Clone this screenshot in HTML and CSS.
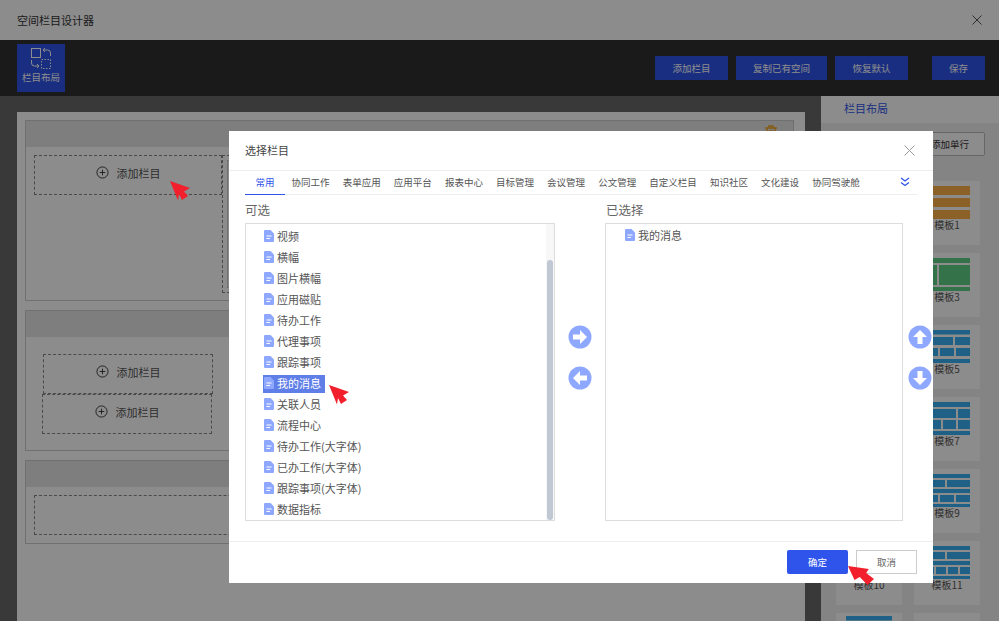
FILE: index.html
```html
<!DOCTYPE html>
<html lang="zh-CN">
<head>
  <meta charset="UTF-8">
  <title>空间栏目设计器</title>
  <link rel="stylesheet" href="styles.css">
</head>
<body>
  <svg class="defs" width="0" height="0">
    <symbol id="doc" viewBox="0 0 10 12">
      <path d="M1 0h5.500L10 3.500V11a1 1 0 0 1-1 1H1a1 1 0 0 1-1-1V1a1 1 0 0 1 1-1z" fill="#8fa8ff"/>
      <path d="M2.500 6h5M2.500 8.500h3.500" stroke="#fff" stroke-width="1"/>
    </symbol>
    <symbol id="tpl-orange" viewBox="0 0 46 33">
      <path d="M0 0h46v9H0zM0 12h46v9H0zM0 24h46v9H0z" fill="#ffb148"/>
    </symbol>
    <symbol id="tpl-green" viewBox="0 0 46 33">
      <path d="M0 0h46v5H0zM0 7h13v20H0zM15 7h31v20H15zM0 29h46v4H0z" fill="#60d188"/>
    </symbol>
    <symbol id="tpl-5" viewBox="0 0 46 33">
      <path d="M0 0h46v4.500H0zM0 7h29v8H0zM31 7h15v8H31zM0 18h14v8H0zM16 18h14v8H16zM32 18h14v8H32zM0 29h46v4H0z" fill="#3ab0f5"/>
    </symbol>
    <symbol id="tpl-7" viewBox="0 0 46 33">
      <path d="M0 0h46v5H0zM0 7h32v9H0zM34 7h12v9H34zM0 18h17v9H0zM19 18h13v9H19zM34 18h12v9H34zM0 29h46v4H0z" fill="#3ab0f5"/>
    </symbol>
    <symbol id="tpl-9" viewBox="0 0 46 33">
      <path d="M0 0h46v4H0zM0 6h21v7H0zM23 6h23v7H23zM0 15h46v4H0zM0 21h14v7H0zM16 21h14v7H16zM32 21h14v7H32zM0 30h46v3H0z" fill="#3ab0f5"/>
    </symbol>
    <symbol id="tpl-11" viewBox="0 0 46 33">
      <path d="M0 0h46v4H0zM0 6h21v7H0zM23 6h23v7H23zM0 15h46v4H0zM0 21h10v7H0zM12 21h10v7H12zM24 21h10v7H24zM36 21h10v7H36zM0 30h46v3H0z" fill="#3ab0f5"/>
    </symbol>
    <symbol id="plus" viewBox="0 0 14 14">
      <circle cx="7" cy="7" r="6" fill="none" stroke="#333" stroke-width="1"/>
      <path d="M4 7h6M7 4v6" stroke="#333" stroke-width="1"/>
    </symbol>
  </svg>

  <div class="app">
    <header class="topbar">
      <span class="topbar-title">空间栏目设计器</span>
      <svg class="close-icon" width="10" height="10" viewBox="0 0 10 10"><path d="M.5.500l9 9M9.500.500l-9 9" stroke="#555" stroke-width="1"/></svg>
    </header>

    <div class="toolbar">
      <div class="layout-btn">
        <svg width="24" height="24" viewBox="0 0 24 24" fill="none" stroke="#fff" stroke-width="1">
          <rect x="2.500" y="2.500" width="9" height="9"/>
          <rect x="12.500" y="13.500" width="9" height="9" stroke-dasharray="1.500 1.500"/>
          <path d="M14 4h4.500a3 3 0 0 1 3 3v3M16 2l-2 2 2 2"/>
          <path d="M2.500 14v3a3 3 0 0 0 3 3H10M8 18l2 2-2 2"/>
        </svg>
        <span>栏目布局</span>
      </div>
      <div class="toolbar-actions">
        <button class="tool-btn w73">添加栏目</button>
        <button class="tool-btn w91">复制已有空间</button>
        <button class="tool-btn w73">恢复默认</button>
        <button class="tool-btn w53 save">保存</button>
      </div>
    </div>

    <div class="workspace">
      <main class="canvas">
        <section class="row">
          <div class="row-head">
            <svg class="trash" width="12" height="13" viewBox="0 0 12 13" fill="none" stroke="#f5a623" stroke-width="1.500"><path d="M0 3h12M4 3V1h4v2M2 3v9h8V3M5 5v5M7 5v5"/></svg>
          </div>
          <div class="row-body first">
            <div class="cell"><svg width="13" height="13"><use href="#plus"/></svg>添加栏目</div>
            <div class="cell tall"><div class="cell-inner"></div></div>
          </div>
        </section>
        <section class="row">
          <div class="row-head"></div>
          <div class="row-body stacked">
            <div class="cell"><svg width="13" height="13"><use href="#plus"/></svg>添加栏目</div>
            <div class="cell shift"><svg width="13" height="13"><use href="#plus"/></svg>添加栏目</div>
          </div>
        </section>
        <section class="row">
          <div class="row-head"></div>
          <div class="row-body last">
            <div class="cell wide"></div>
          </div>
        </section>
      </main>

      <aside class="sidebar">
        <div class="side-title">栏目布局</div>
        <div class="side-tools"><button class="add-row">添加单行</button></div>
        <div class="tpl-grid">
          <div class="tpl"><svg><use href="#tpl-orange"/></svg><span>模板0</span></div>
          <div class="tpl"><svg><use href="#tpl-orange"/></svg><span>模板1</span></div>
          <div class="tpl"><svg><use href="#tpl-green"/></svg><span>模板2</span></div>
          <div class="tpl"><svg><use href="#tpl-green"/></svg><span>模板3</span></div>
          <div class="tpl"><svg><use href="#tpl-5"/></svg><span>模板4</span></div>
          <div class="tpl"><svg><use href="#tpl-5"/></svg><span>模板5</span></div>
          <div class="tpl"><svg><use href="#tpl-7"/></svg><span>模板6</span></div>
          <div class="tpl"><svg><use href="#tpl-7"/></svg><span>模板7</span></div>
          <div class="tpl"><svg><use href="#tpl-9"/></svg><span>模板8</span></div>
          <div class="tpl"><svg><use href="#tpl-9"/></svg><span>模板9</span></div>
          <div class="tpl"><svg><use href="#tpl-11"/></svg><span>模板10</span></div>
          <div class="tpl"><svg><use href="#tpl-11"/></svg><span>模板11</span></div>
          <div class="tpl tpl-cut"><svg><use href="#tpl-5"/></svg></div>
          <div class="tpl"></div>
        </div>
      </aside>
    </div>
  </div>

  <div class="mask"></div>

  <div class="modal">
    <div class="modal-head">
      <span>选择栏目</span>
      <svg width="11" height="11" viewBox="0 0 11 11"><path d="M.5.500l10 10M10.500.500l-10 10" stroke="#999" stroke-width="1"/></svg>
    </div>
    <div class="tabs">
      <span class="tab active">常用</span>
      <span class="tab">协同工作</span>
      <span class="tab">表单应用</span>
      <span class="tab">应用平台</span>
      <span class="tab">报表中心</span>
      <span class="tab">目标管理</span>
      <span class="tab">会议管理</span>
      <span class="tab">公文管理</span>
      <span class="tab">自定义栏目</span>
      <span class="tab">知识社区</span>
      <span class="tab">文化建设</span>
      <span class="tab">协同驾驶舱</span>
      <svg class="tabs-more" width="10" height="10" viewBox="0 0 10 10" fill="none" stroke="#2f54eb" stroke-width="1.300"><path d="M1 1l4 3 4-3M1 5.500l4 3 4-3"/></svg>
    </div>

    <div class="picker">
      <div class="pick-col left">
        <div class="pick-label">可选</div>
        <div class="pick-box">
          <ul class="pick-list">
            <li><span><svg width="10" height="12"><use href="#doc"/></svg>视频</span></li>
            <li><span><svg width="10" height="12"><use href="#doc"/></svg>横幅</span></li>
            <li><span><svg width="10" height="12"><use href="#doc"/></svg>图片横幅</span></li>
            <li><span><svg width="10" height="12"><use href="#doc"/></svg>应用磁贴</span></li>
            <li><span><svg width="10" height="12"><use href="#doc"/></svg>待办工作</span></li>
            <li><span><svg width="10" height="12"><use href="#doc"/></svg>代理事项</span></li>
            <li><span><svg width="10" height="12"><use href="#doc"/></svg>跟踪事项</span></li>
            <li class="selected"><span><svg width="10" height="12"><use href="#doc"/></svg>我的消息</span></li>
            <li><span><svg width="10" height="12"><use href="#doc"/></svg>关联人员</span></li>
            <li><span><svg width="10" height="12"><use href="#doc"/></svg>流程中心</span></li>
            <li><span><svg width="10" height="12"><use href="#doc"/></svg>待办工作(大字体)</span></li>
            <li><span><svg width="10" height="12"><use href="#doc"/></svg>已办工作(大字体)</span></li>
            <li><span><svg width="10" height="12"><use href="#doc"/></svg>跟踪事项(大字体)</span></li>
            <li><span><svg width="10" height="12"><use href="#doc"/></svg>数据指标</span></li>
          </ul>
          <div class="scrollbar"><div class="thumb"></div></div>
        </div>
      </div>

      <div class="arrows mid">
        <svg width="24" height="24" viewBox="0 0 24 24"><circle cx="12" cy="12" r="11.500" fill="#8fa8ff"/><path d="M5 9.500h7V5l7 7-7 7v-4.500H5z" fill="#fff"/></svg>
        <svg width="24" height="24" viewBox="0 0 24 24"><circle cx="12" cy="12" r="11.500" fill="#8fa8ff"/><path d="M19 9.500h-7V5l-7 7 7 7v-4.500h7z" fill="#fff"/></svg>
      </div>

      <div class="pick-col right">
        <div class="pick-label">已选择</div>
        <div class="pick-box">
          <ul class="pick-list">
            <li><span><svg width="10" height="12"><use href="#doc"/></svg>我的消息</span></li>
          </ul>
        </div>
      </div>

      <div class="arrows side">
        <svg width="24" height="24" viewBox="0 0 24 24"><circle cx="12" cy="12" r="11.500" fill="#8fa8ff"/><path d="M9.500 19v-7H5l7-7 7 7h-4.500v7z" fill="#fff"/></svg>
        <svg width="24" height="24" viewBox="0 0 24 24"><circle cx="12" cy="12" r="11.500" fill="#8fa8ff"/><path d="M9.500 5v7H5l7 7 7-7h-4.500V5z" fill="#fff"/></svg>
      </div>
    </div>

    <div class="modal-foot">
      <button class="foot-btn ok">确定</button>
      <button class="foot-btn">取消</button>
    </div>
  </div>

  <svg class="pointer p1" viewBox="0 0 20 20" preserveAspectRatio="none"><path d="M0 0L20 7L14 10.500L18 15L12 19L9 13L8 19.500z"/></svg>
  <svg class="pointer p2" viewBox="0 0 20 20" preserveAspectRatio="none"><path d="M0 0L20 7L14 10.500L18 15L12 19L9 13L8 19.500z"/></svg>
  <svg class="pointer p3" viewBox="0 0 20 20" preserveAspectRatio="none"><path d="M0 0L16 3L14 7L20 13L15 19L9 11L5 14z"/></svg>
</body>
</html>
```

FILE: styles.css
```css
* {
  box-sizing: border-box;
}
html, body {
  margin: 0;
  height: 100%;
}
body {
  position: relative;
  width: 999px;
  height: 621px;
  overflow: hidden;
  font-family: "Noto Sans CJK SC", "Noto Sans", sans-serif;
  color: #333;
  background: #fff;
}
button {
  font-family: inherit;
  cursor: pointer;
}
.defs {
  position: absolute;
}
.app {
  display: flex;
  flex-direction: column;
  height: 621px;
}

/* page under the mask */
.topbar {
  flex: 0 0 40px;
  display: flex;
  align-items: center;
  justify-content: space-between;
  padding: 0 17px 0 17px;
  background: #fff;
  font-size: 11px;
}
.toolbar {
  flex: 0 0 56px;
  display: flex;
  align-items: center;
  padding: 0 14px 0 17px;
  background: #303030;
}
.layout-btn {
  width: 48px;
  height: 48px;
  display: flex;
  flex-direction: column;
  align-items: center;
  padding-top: 2px;
  background: #2f54eb;
  color: #fff;
  font-size: 9.500px;
  line-height: 14px;
}
.toolbar-actions {
  margin-left: auto;
  display: flex;
  gap: 8px;
}
.tool-btn {
  height: 24px;
  padding: 0;
  border: none;
  background: #2f54eb;
  color: #fff;
  font-size: 9.500px;
}
.w73 { width: 73px; }
.w91 { width: 91px; }
.w53 { width: 53px; }
.save { margin-left: 16px; }

.workspace {
  flex: 1;
  display: flex;
  min-height: 0;
  padding-left: 17px;
  background: #696969;
}
.canvas {
  width: 788px;
  margin: 16px 16px 0 0;
  padding: 8px;
  background: #fff;
  display: flex;
  flex-direction: column;
  gap: 9px;
}
.row {
  width: 769px;
  border: 1px solid #ccc;
}
.row-head {
  height: 26px;
  background: #e6e6e6;
  display: flex;
  justify-content: flex-end;
  padding: 4px 16px 0 0;
}
.row-body {
  display: flex;
}
.row-body.first {
  padding: 8px 0 7px 8px;
}
.row-body.stacked {
  flex-direction: column;
  padding: 17px 0 16px 17px;
}
.row-body.last {
  padding: 8px;
}
.cell {
  width: 188px;
  height: 40px;
  display: flex;
  align-items: center;
  justify-content: center;
  gap: 8px;
  padding-bottom: 5px;
  border: 1px dashed #888;
  font-size: 11px;
  color: #555;
}
.stacked .cell {
  width: 170px;
}
.cell.shift {
  margin-left: -1px;
}
.cell.tall {
  flex: 1;
  width: auto;
  height: 138px;
  align-items: stretch;
  justify-content: stretch;
  padding: 4px;
}
.cell-inner {
  flex: 1;
  border: 1px solid #ccc;
}
.cell.wide {
  width: 100%;
}

.sidebar {
  flex: 1;
  background: #f0f0f0;
  overflow: hidden;
}
.side-title {
  height: 27px;
  padding-left: 23px;
  background: #fff;
  color: #2f54eb;
  font-size: 11px;
  line-height: 25px;
}
.side-tools {
  display: flex;
  justify-content: flex-end;
  padding: 9px 14px 0 0;
}
.add-row {
  width: 70px;
  height: 24px;
  padding: 0;
  border: 1px solid #bbb;
  border-radius: 2px;
  background: #fff;
  color: #333;
  font-size: 9.500px;
}
.tpl-grid {
  display: grid;
  grid-template-columns: 66px 66px;
  gap: 8px 12px;
  padding: 25px 0 0 15px;
}
.tpl {
  height: 64px;
  padding-top: 5px;
  background: #fff;
  display: flex;
  flex-direction: column;
  align-items: center;
  font-size: 10px;
  line-height: 14px;
  color: #555;
}
.tpl svg {
  width: 46px;
  height: 33px;
  margin-bottom: -1px;
  flex: none;
}
.tpl-cut {
  padding-top: 3px;
}

.mask {
  position: absolute;
  inset: 0;
  background: rgba(0, 0, 0, 0.45);
}

/* dialog */
.modal {
  position: absolute;
  left: 229px;
  top: 131px;
  width: 704px;
  height: 452px;
  background: #fff;
  display: flex;
  flex-direction: column;
}
.modal-head {
  flex: 0 0 40px;
  display: flex;
  align-items: center;
  justify-content: space-between;
  padding: 0 18px 1px 16px;
  border-bottom: 1px solid #eee;
  font-size: 11px;
  color: #444;
}
.tabs {
  width: 672px;
  height: 24px;
  margin-left: 16px;
  display: flex;
  align-items: center;
  border-bottom: 1px solid #eee;
}
.tab {
  height: 24px;
  padding: 0 6.550px;
  font-size: 9.500px;
  line-height: 23px;
  color: #555;
}
.tab.active {
  width: 40px;
  padding: 0;
  text-align: center;
  color: #2f54eb;
  border-bottom: 1px solid #2f54eb;
}
.tabs-more {
  margin: 0 7px 2px auto;
}
.picker {
  flex: 1;
  display: flex;
  padding-left: 16px;
}
.pick-col.left {
  width: 310px;
}
.pick-col.right {
  width: 298px;
}
.pick-label {
  height: 28px;
  font-size: 12.500px;
  line-height: 30px;
  color: #666;
}
.pick-col.right .pick-label {
  padding-left: 1px;
}
.pick-box {
  height: 298px;
  display: flex;
  border: 1px solid #ddd;
}
.pick-list {
  flex: 1;
  margin: 0;
  padding: 2px 0 0 17px;
  list-style: none;
  font-size: 11px;
  color: #555;
}
.pick-list li {
  height: 21px;
  display: flex;
  align-items: center;
}
.pick-list span {
  height: 18px;
  display: inline-flex;
  align-items: center;
  gap: 3px;
  padding: 0 4px 2px 1px;
}
.pick-list svg {
  flex: none;
}
.pick-col.right .pick-list {
  padding: 1px 0 0 18px;
}
.selected span {
  background: #5f7ee8;
  color: #fff;
}
.scrollbar {
  flex: 0 0 8px;
  background: #f7f7f7;
  padding: 36px 0 0 1px;
}
.thumb {
  width: 6px;
  height: 100%;
  background: #c0c8d4;
  border-radius: 3px;
}
.arrows {
  display: flex;
  flex-direction: column;
  gap: 17px;
  padding-top: 130px;
}
.arrows.mid {
  width: 50px;
  align-items: center;
}
.arrows.side {
  width: 30px;
  padding-left: 5px;
}
.modal-foot {
  flex: 0 0 42px;
  display: flex;
  justify-content: flex-end;
  gap: 8px;
  padding: 8px 16px 0 0;
  border-top: 1px solid #eee;
}
.foot-btn {
  width: 61px;
  height: 24px;
  padding: 0;
  border: 1px solid #ccc;
  background: #fff;
  color: #666;
  font-size: 9.500px;
}
.foot-btn.ok {
  border: none;
  border-radius: 2px;
  background: #2f54eb;
  color: #fff;
}

/* red marks drawn on the screenshot */
.pointer {
  position: absolute;
  width: 20px;
  height: 20px;
  fill: #f2202c;
}
.p1 { left: 170px; top: 181px; }
.p2 { left: 329px; top: 385px; }
.p3 { left: 848px; top: 566px; width: 26px; height: 20px; }
```
